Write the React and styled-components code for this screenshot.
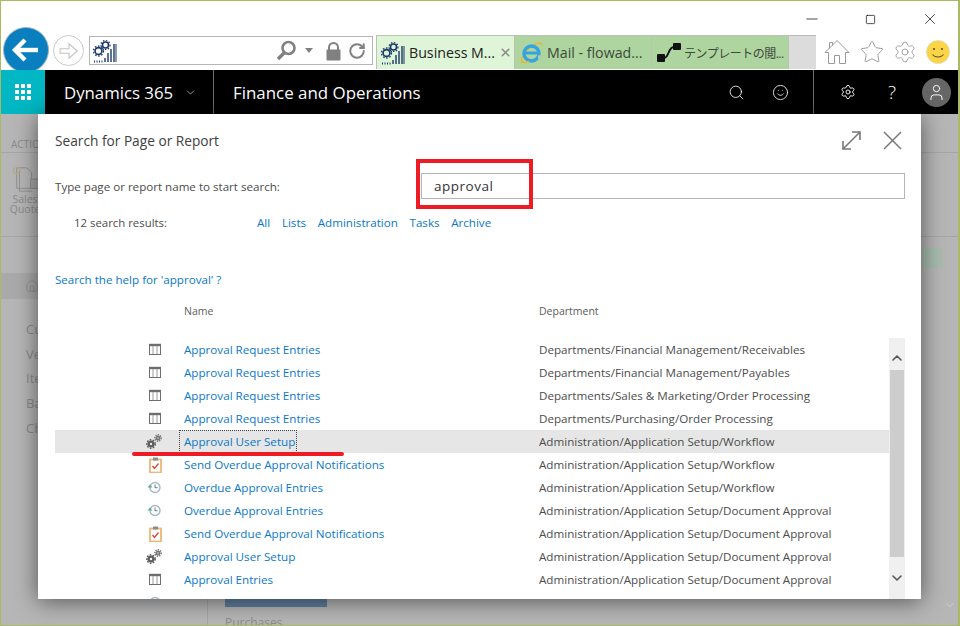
import React from 'react';
import styled, { createGlobalStyle } from 'styled-components';
import { Search, Smile, Settings, User, ChevronDown, ChevronUp, X, Minus, Square, House, Star, RotateCw } from 'lucide-react';

const GlobalStyle = createGlobalStyle`
  html, body { margin: 0; padding: 0; background: #fff; }
  body { font-family: "Open Sans", "Noto Sans CJK JP", sans-serif; }
  svg { flex: none; }
`;

const Win = styled.div`
  width: 960px;
  height: 626px;
  box-sizing: border-box;
  border: 1px solid #a9bb62;
  border-width: 1px 2px 1px 1px;
  overflow: hidden;
  display: flex;
  flex-direction: column;
  background: #fff;
`;

const TitleRow = styled.div`
  height: 34px;
  flex: none;
  box-sizing: border-box;
  padding-top: 2px;
  display: flex;
  justify-content: flex-end;
`;

const WinButton = styled.div`
  width: ${p => p.$w}px;
  display: flex;
  align-items: center;
  justify-content: center;
  color: #111;
`;

const ToolRow = styled.div`
  height: 35px;
  flex: none;
  display: flex;
  align-items: flex-start;
`;

const BackButton = styled.div`
  width: 46px;
  height: 46px;
  flex: none;
  box-sizing: border-box;
  margin: -8px 0 0 2px;
  border-radius: 50%;
  background: #0a7fc0;
  border: 1px solid #9fb4c2;
  display: flex;
  align-items: center;
  justify-content: center;
`;

const ForwardButton = styled.div`
  width: 31px;
  height: 31px;
  flex: none;
  box-sizing: border-box;
  margin: 0 0 0 4px;
  border-radius: 50%;
  border: 1px solid #c9c9c9;
  display: flex;
  align-items: center;
  justify-content: center;
`;

const AddressBar = styled.div`
  width: 284px;
  height: 29px;
  flex: none;
  box-sizing: border-box;
  margin: 1px 3px 0 5px;
  border: 1px solid #b5b5b5;
  display: flex;
  align-items: center;
  padding: 0 3px;
  color: #808080;
`;

const AddressTools = styled.div`
  margin-left: auto;
  display: flex;
  align-items: center;
  gap: 5px;
  padding-right: 3px;
`;

const Caret = styled.span`
  width: 0;
  height: 0;
  border: 4px solid transparent;
  border-top: 5px solid #808080;
  border-bottom: 0;
  margin: 0 6px 0 3px;
`;

const Tab = styled.div`
  width: ${p => p.$w}px;
  height: 34px;
  flex: none;
  box-sizing: border-box;
  border: 1px solid #b9c4b4;
  border-width: 1px 1px 0 ${p => (p.$first ? 1 : 0)}px;
  background: ${p => (p.$active ? '#dff5d8' : '#aed4a0')};
  color: ${p => (p.$active ? '#222' : '#3d4a3a')};
  display: flex;
  align-items: center;
  gap: ${p => p.$gap || 4}px;
  padding-left: 4px;
  white-space: nowrap;
  overflow: hidden;
`;

const TabGap = styled.div`
  width: 27px;
  height: 34px;
  flex: none;
  background: #dcdcdc;
  border-top: 1px solid #b9b9b9;
  box-sizing: border-box;
`;

const TabClose = styled.span`
  margin-left: auto;
  margin-right: 5px;
  display: flex;
  color: #8c8c8c;
`;

const TabText = styled.span`
  font-size: 14.2px;
`;

const TabTextJp = styled.span`
  font-size: 12px;
  letter-spacing: -0.5px;
`;

const BrowserTools = styled.div`
  display: flex;
  align-items: center;
  gap: 8.5px;
  padding-left: 8px;
  height: 34px;
  color: #9a9a9a;
`;

const AppBar = styled.div`
  position: relative;
  z-index: 1;
  height: 44px;
  flex: none;
  background: #000;
  color: #fff;
  display: flex;
  align-items: center;
`;

const Waffle = styled.div`
  width: 44px;
  height: 44px;
  flex: none;
  background: #00b7c3;
  display: grid;
  grid-template-columns: repeat(3, 4px);
  grid-auto-rows: 4px;
  gap: 2px;
  align-content: center;
  justify-content: center;
`;

const Dot = styled.span`
  background: #fff;
`;

const Brand = styled.div`
  width: 169px;
  height: 44px;
  flex: none;
  box-sizing: border-box;
  padding: 1px 0 0 19px;
  border-right: 1px solid #6e6e6e;
  display: flex;
  align-items: center;
  gap: 11px;
  font-size: 16.8px;
  white-space: nowrap;
`;

const AppTitle = styled.div`
  margin-left: 19px;
  padding-top: 1px;
  font-size: 16.9px;
  white-space: nowrap;
`;

const BarTools = styled.div`
  margin-left: auto;
  height: 44px;
  display: flex;
  align-items: center;
`;

const BarIcon = styled.div`
  width: 44px;
  height: 44px;
  display: flex;
  align-items: center;
  justify-content: center;
  font-size: 19px;
  font-weight: 300;
`;

const BarIconDivided = styled(BarIcon)`
  width: 57px;
  box-sizing: border-box;
  margin-left: 11px;
  padding-left: 12px;
  border-left: 1px solid #6e6e6e;
`;

const Avatar = styled.div`
  width: 29px;
  height: 29px;
  border-radius: 50%;
  background: #666;
  display: flex;
  align-items: center;
  justify-content: center;
`;

const Page = styled.div`
  position: relative;
  flex: 1;
  min-height: 0;
  background: #b6b6b6;
  color: #8b8b8b;
  font-size: 12px;
`;

const ActionPane = styled.div`
  height: 123px;
  box-sizing: border-box;
  padding-top: 19px;
  border-bottom: 1px solid #a6a6a6;
`;

const ActionStrip = styled.div`
  height: 20px;
  box-sizing: border-box;
  border-bottom: 1px solid #a6a6a6;
  padding: 5px 0 0 10px;
  font-size: 10px;
  line-height: 12px;
`;

const ActionTile = styled.div`
  width: 40px;
  padding: 12px 0 0 4px;
  font-size: 10.5px;
  line-height: 10px;
  text-align: center;
  svg { display: block; margin: 0 0 1px 7px; }
`;

const Body = styled.div`
  display: flex;
  height: 388px;
`;

const Sidebar = styled.div`
  width: 207px;
  flex: none;
  box-sizing: border-box;
  border-right: 1px solid #a6a6a6;
  padding-top: 36px;
`;

const HomeRow = styled.div`
  height: 26px;
  background: #aaa;
  padding-left: 24px;
  display: flex;
  align-items: center;
  color: #8b8b8b;
  margin-bottom: 21px;
`;

const SideItem = styled.div`
  height: 24.7px;
  padding-left: 25px;
  font-size: 13px;
`;

const Main = styled.div`
  flex: 1;
  padding: 11px 0 0 17px;
  display: flex;
  flex-direction: column;
`;

const Tile = styled.div`
  align-self: flex-end;
  width: 20px;
  height: 20px;
  flex: none;
  background: #a7bcae;
  margin-right: 16px;
`;

const FooterRow = styled.div`
  margin-top: 331px;
  height: 8px;
  flex: none;
  display: flex;
  align-items: center;
  justify-content: space-between;
  padding-right: 1px;
  color: #c6c6c6;
`;

const BlueBar = styled.div`
  width: 102px;
  height: 8px;
  background: #5f7f9e;
`;

const FooterChevron = styled.span`
  display: flex;
  margin-top: 4px;
`;

const Purchases = styled.div`
  margin-top: 7px;
  flex: none;
  font-size: 12px;
`;

const Modal = styled.div`
  position: absolute;
  z-index: 2;
  top: 0;
  left: 37px;
  width: 883px;
  height: 485px;
  box-sizing: border-box;
  padding: 0 16px 0 17px;
  background: #fff;
  box-shadow: 0 2px 22px rgba(0, 0, 0, 0.55);
  color: #4c4c4c;
  overflow: hidden;
`;

const ModalHead = styled.div`
  height: 54px;
  padding-bottom: 2px;
  box-sizing: border-box;
  display: flex;
  align-items: center;
  justify-content: space-between;
`;

const ModalTitle = styled.div`
  font-size: 13.7px;
  color: #404040;
`;

const ModalTools = styled.div`
  display: flex;
  gap: 20px;
  align-items: center;
  padding-right: 2px;
`;

const SearchRow = styled.div`
  display: flex;
  align-items: center;
  justify-content: space-between;
  height: 26px;
  margin-top: 5px;
  font-size: 11.6px;
`;

const SearchInput = styled.div`
  width: 484px;
  height: 26px;
  box-sizing: border-box;
  border: 1px solid #b5b5b5;
  padding-left: 12px;
  line-height: 24px;
  font-size: 13.5px;
  letter-spacing: 0.5px;
  color: #333;
`;

const ResultsRow = styled.div`
  margin-top: 15px;
  padding-left: 19px;
  display: flex;
  font-size: 11.4px;
  line-height: 18px;
`;

const ResultsCount = styled.div`
  width: 183px;
  flex: none;
`;

const FilterLinks = styled.div`
  display: flex;
  gap: 11.7px;
`;

const Link = styled.a`
  color: #0b78c8;
  font-size: 11.6px;
  text-decoration: none;
`;

const HelpLine = styled.div`
  margin-top: 39px;
  line-height: 18px;
`;

const ColumnHead = styled.div`
  display: grid;
  grid-template-columns: 129px 355px 1fr;
  margin-top: 13px;
  line-height: 18px;
  font-size: 10.5px;
  color: #5c5c5c;
`;

const ListArea = styled.div`
  display: flex;
  margin-top: 18px;
`;

const List = styled.div`
  flex: 1;
  min-width: 0;
`;

const Row = styled.div`
  display: grid;
  grid-template-columns: 129px 355px 1fr;
  height: 23px;
  align-items: center;
  background: ${p => (p.$selected ? '#e6e6e6' : 'transparent')};
  font-size: 11.65px;
  color: #4c4c4c;
  white-space: nowrap;
`;

const IconCell = styled.div`
  display: flex;
  justify-content: flex-end;
  padding-right: 22px;
`;

const NameCell = styled.div`
  min-width: 0;
`;

const NameLink = styled(Link)`
  display: inline-block;
  line-height: 21px;
  font-size: 11.65px;
  ${p => p.$selected && 'outline: 1px dotted #444; margin-left: -4px; padding: 0 1px 0 4px;'}
`;

const Scrollbar = styled.div`
  width: 16px;
  height: 261px;
  flex: none;
  background: #f0f0f0;
  display: flex;
  flex-direction: column;
  align-items: center;
  color: #555;
`;

const ScrollButton = styled.div`
  height: ${p => p.$h}px;
  flex: none;
  box-sizing: border-box;
  padding-top: ${p => p.$pad || 0}px;
  display: flex;
  align-items: center;
  justify-content: center;
`;

const ScrollThumb = styled.div`
  width: 14px;
  height: 187px;
  flex: none;
  background: #cdcdcd;
`;

const RedBox = styled.div`
  position: absolute;
  z-index: 3;
  left: 415px;
  top: 45px;
  width: 117px;
  height: 50px;
  box-sizing: border-box;
  border: 4px solid #ed1c24;
`;

const RedLine = styled.div`
  position: absolute;
  z-index: 3;
  left: 131px;
  top: 338px;
  width: 212px;
  height: 4px;
  border-radius: 2px;
  background: #ed1c24;
`;

const AppGlyph = () => (
  <svg width="24" height="24" viewBox="0 0 24 24" fill="none" stroke="#1b3768">
    <circle cx="5.5" cy="12" r="3.4" strokeWidth="1.6" />
    <circle cx="5.5" cy="12" r="5" strokeWidth="1.3" strokeDasharray="1.6 1.6" />
    <circle cx="12.5" cy="6" r="3" strokeWidth="1.5" />
    <circle cx="12.5" cy="6" r="4.5" strokeWidth="1.2" strokeDasharray="1.5 1.5" />
    <path d="M1 22.5h1M3.5 22.5h1M6 22.5h1M8.5 22.5h1" strokeWidth="2" />
    <path d="M12 23v-4M15 23v-9M18 23v-13M21 23V5" strokeWidth="1.4" />
    <path d="M23 23V5" strokeWidth="1" />
  </svg>
);

const IeGlyph = () => (
  <svg width="24" height="24" viewBox="0 0 24 24" fill="none">
    <path d="M3 22C1 19 6 9 13 5c5-3 10-4 10-1" stroke="#eeb42c" strokeWidth="1.6" />
    <circle cx="12.5" cy="12.5" r="7.5" stroke="#35a4e2" strokeWidth="3.4" />
    <path d="M6 12h14" stroke="#35a4e2" strokeWidth="3" />
    <path d="M19 16h2.5" stroke="#aed4a0" strokeWidth="3.4" />
    <path d="M4 20.5c1 2 4 1 6-.5" stroke="#eeb42c" strokeWidth="1.4" />
  </svg>
);

const FlowGlyph = () => (
  <svg width="26" height="22" viewBox="0 0 26 22">
    <rect x="1" y="12" width="8" height="8" rx="1" fill="#111" />
    <rect x="17" y="1" width="8" height="7" rx="1" fill="#111" />
    <path d="M8 16c5 0 4-11 10-11" fill="none" stroke="#111" strokeWidth="1.8" />
  </svg>
);

const BackArrow = () => (
  <svg width="30" height="26" viewBox="0 0 30 26" fill="none" stroke="#fff" strokeWidth="4.4">
    <path d="M27 13H5" />
    <path d="M14 3L4 13l10 10" />
  </svg>
);

const ForwardArrow = () => (
  <svg width="20" height="18" viewBox="0 0 18 16" fill="#fff" stroke="#c4c4c4" strokeWidth="1">
    <path d="M1 6h8V1.5L16.5 8 9 14.5V10H1z" />
  </svg>
);

const MirrorSearch = () => (
  <svg width="21" height="21" viewBox="0 0 21 21" fill="none" stroke="#808080">
    <circle cx="12.5" cy="8" r="6" strokeWidth="2.6" />
    <path d="M8 13l-6 6" strokeWidth="3.4" />
  </svg>
);

const LockIcon = () => (
  <svg width="19" height="20" viewBox="0 0 19 20" fill="none">
    <path d="M5 9V6.5a4.5 4.5 0 0 1 9 0V9" stroke="#808080" strokeWidth="2" />
    <rect x="2.5" y="8.5" width="14" height="11" rx="1" fill="#808080" />
  </svg>
);

const HouseOutline = () => (
  <svg width="26" height="26" viewBox="0 0 26 26" fill="#fff" stroke="#9a9a9a" strokeWidth="1">
    <path d="M1 13.5L13 1.5l12 12h-3.5v11h-6v-8h-5v8h-6v-11z" />
    <path d="M5.5 9.5v-6h3v3" fill="none" />
  </svg>
);

const SmileyFace = () => (
  <svg width="24" height="24" viewBox="0 0 24 24">
    <circle cx="12" cy="12" r="11.5" fill="#fbd448" stroke="#d8d8c0" strokeWidth="0.6" />
    <circle cx="8" cy="9" r="1.1" fill="#5a5230" />
    <circle cx="16" cy="9" r="1.1" fill="#5a5230" />
    <path d="M6.5 14.5c2.5 3.4 8.5 3.4 11 0" fill="none" stroke="#5a5230" strokeWidth="1.1" />
  </svg>
);

const ExpandIcon = () => (
  <svg width="21" height="21" viewBox="0 0 21 21" fill="none" stroke="#777" strokeWidth="1.6">
    <path d="M2 19L19 2" />
    <path d="M11 2h8v8" />
    <path d="M2 11v8h8" />
  </svg>
);

const CloseIcon = () => (
  <svg width="21" height="21" viewBox="0 0 21 21" fill="none" stroke="#777" strokeWidth="1.5">
    <path d="M2 2l17 17M19 2L2 19" />
  </svg>
);

const SalesIcon = () => (
  <svg width="28" height="28" viewBox="0 0 28 30" fill="none" stroke="#8f8f8f">
    <path d="M4 3h11l5 5v17H4z" />
    <path d="M7 6v22h14" />
    <rect x="19" y="15" width="9" height="10" fill="#a9a9a9" />
    <circle cx="4" cy="6" r="3.5" stroke="#b3a987" strokeWidth="2" strokeDasharray="1.5 1" />
  </svg>
);

const TableIcon = () => (
  <svg width="14" height="13" viewBox="0 0 14 13" fill="none" stroke="#6e6e6e">
    <rect x="1.5" y="1.5" width="11" height="10" />
    <path d="M1 2h12" strokeWidth="2.4" />
    <path d="M5 3v8M9 3v8" stroke="#9a9a9a" />
  </svg>
);

const GearsIcon = () => (
  <svg width="16" height="15" viewBox="0 0 16 15" fill="none" stroke="#5e5e5e">
    <circle cx="5" cy="10" r="2.4" strokeWidth="2.4" />
    <circle cx="5" cy="10" r="4.2" strokeWidth="1.6" strokeDasharray="1.6 1.4" />
    <circle cx="12" cy="4" r="1.6" strokeWidth="1.8" stroke="#777" />
    <circle cx="12" cy="4" r="3.2" strokeWidth="1.4" strokeDasharray="1.3 1.1" stroke="#777" />
  </svg>
);

const ClipIcon = () => (
  <svg width="13" height="16" viewBox="0 0 13 16" fill="#fff">
    <rect x="1" y="2.5" width="11" height="13" stroke="#e9b877" strokeWidth="1.8" />
    <rect x="4" y="0.5" width="5" height="3" fill="#8c8c8c" />
    <path d="M3.5 9l2 2.5L9.5 6.5" fill="none" stroke="#d8453a" strokeWidth="1.3" />
  </svg>
);

const ClockIcon = () => (
  <svg width="15" height="13" viewBox="0 0 15 13" fill="none">
    <circle cx="8" cy="6.5" r="5" stroke="#a3b7c8" strokeWidth="1.4" />
    <path d="M8 3.5v3.2h2.6" stroke="#5f7d92" />
    <path d="M0.5 6.5L3 3.5l2.5 3z" fill="#5fae86" />
  </svg>
);

const ICONS = { table: TableIcon, gears: GearsIcon, clip: ClipIcon, clock: ClockIcon };

const RESULTS = [
  ['table', 'Approval Request Entries', 'Departments/Financial Management/Receivables'],
  ['table', 'Approval Request Entries', 'Departments/Financial Management/Payables'],
  ['table', 'Approval Request Entries', 'Departments/Sales & Marketing/Order Processing'],
  ['table', 'Approval Request Entries', 'Departments/Purchasing/Order Processing'],
  ['gears', 'Approval User Setup', 'Administration/Application Setup/Workflow', true],
  ['clip', 'Send Overdue Approval Notifications', 'Administration/Application Setup/Workflow'],
  ['clock', 'Overdue Approval Entries', 'Administration/Application Setup/Workflow'],
  ['clock', 'Overdue Approval Entries', 'Administration/Application Setup/Document Approval'],
  ['clip', 'Send Overdue Approval Notifications', 'Administration/Application Setup/Document Approval'],
  ['gears', 'Approval User Setup', 'Administration/Application Setup/Document Approval'],
  ['table', 'Approval Entries', 'Administration/Application Setup/Document Approval'],
  ['clock', 'Posted Approval Entries', 'Administration/Application Setup/Document Approval'],
];

const FILTERS = ['All', 'Lists', 'Administration', 'Tasks', 'Archive'];
const SIDE_ITEMS = ['Customers', 'Vendors', 'Items', 'Bank', 'Charges'];

export default function App() {
  return (
    <Win>
      <GlobalStyle />
      <TitleRow>
        <WinButton $w={52}><Minus size={18} strokeWidth={1} /></WinButton>
        <WinButton $w={64}><Square size={11} strokeWidth={1.6} /></WinButton>
        <WinButton $w={56}><X size={18} strokeWidth={1} /></WinButton>
      </TitleRow>
      <ToolRow>
        <BackButton><BackArrow /></BackButton>
        <ForwardButton><ForwardArrow /></ForwardButton>
        <AddressBar>
          <AppGlyph />
          <AddressTools>
            <MirrorSearch />
            <Caret />
            <LockIcon />
            <RotateCw size={18} strokeWidth={2.6} />
          </AddressTools>
        </AddressBar>
        <Tab $w={139} $active $first>
          <AppGlyph />
          <TabText>Business M...</TabText>
          <TabClose><X size={13} strokeWidth={3} /></TabClose>
        </Tab>
        <Tab $w={137}>
          <IeGlyph />
          <TabText>Mail - flowad...</TabText>
        </Tab>
        <Tab $w={137} $gap={2}>
          <FlowGlyph />
          <TabTextJp>テンプレートの閲...</TabTextJp>
        </Tab>
        <TabGap />
        <BrowserTools>
          <HouseOutline />
          <Star size={26} strokeWidth={0.9} />
          <Settings size={24} strokeWidth={0.9} />
          <SmileyFace />
        </BrowserTools>
      </ToolRow>
      <AppBar>
        <Waffle>
          {Array.from({ length: 9 }, (_, i) => <Dot key={i} />)}
        </Waffle>
        <Brand>
          Dynamics 365
          <ChevronDown size={13} strokeWidth={1} />
        </Brand>
        <AppTitle>Finance and Operations</AppTitle>
        <BarTools>
          <BarIcon><Search size={17} strokeWidth={1.2} /></BarIcon>
          <BarIcon><Smile size={17} strokeWidth={1.2} /></BarIcon>
          <BarIconDivided><Settings size={16} strokeWidth={1.4} /></BarIconDivided>
          <BarIcon>?</BarIcon>
          <BarIcon><Avatar><User size={19} strokeWidth={1.2} /></Avatar></BarIcon>
        </BarTools>
      </AppBar>
      <Page>
        <ActionPane>
          <ActionStrip>ACTION</ActionStrip>
          <ActionTile>
            <SalesIcon />
            Sales Quote
          </ActionTile>
        </ActionPane>
        <Body>
          <Sidebar>
            <HomeRow><House size={14} strokeWidth={1.2} /></HomeRow>
            {SIDE_ITEMS.map(item => <SideItem key={item}>{item}</SideItem>)}
          </Sidebar>
          <Main>
            <Tile />
            <FooterRow>
              <BlueBar />
              <FooterChevron><ChevronDown size={14} strokeWidth={2} /></FooterChevron>
            </FooterRow>
            <Purchases>Purchases</Purchases>
          </Main>
        </Body>
        <Modal>
          <ModalHead>
            <ModalTitle>Search for Page or Report</ModalTitle>
            <ModalTools>
              <ExpandIcon />
              <CloseIcon />
            </ModalTools>
          </ModalHead>
          <SearchRow>
            <span>Type page or report name to start search:</span>
            <SearchInput>approval</SearchInput>
          </SearchRow>
          <ResultsRow>
            <ResultsCount>12 search results:</ResultsCount>
            <FilterLinks>
              {FILTERS.map(f => <Link key={f}>{f}</Link>)}
            </FilterLinks>
          </ResultsRow>
          <HelpLine><Link>Search the help for 'approval' ?</Link></HelpLine>
          <ColumnHead>
            <span />
            <span>Name</span>
            <span>Department</span>
          </ColumnHead>
          <ListArea>
            <List>
              {RESULTS.map(([icon, name, dept, selected], i) => {
                const Icon = ICONS[icon];
                return (
                  <Row key={i} $selected={selected}>
                    <IconCell><Icon /></IconCell>
                    <NameCell><NameLink $selected={selected}>{name}</NameLink></NameCell>
                    <span>{dept}</span>
                  </Row>
                );
              })}
            </List>
            <Scrollbar>
              <ScrollButton $h={32} $pad={8}><ChevronUp size={16} strokeWidth={2.4} /></ScrollButton>
              <ScrollThumb />
              <ScrollButton $h={42}><ChevronDown size={16} strokeWidth={2.4} /></ScrollButton>
            </Scrollbar>
          </ListArea>
        </Modal>
        <RedBox />
        <RedLine />
      </Page>
    </Win>
  );
}
